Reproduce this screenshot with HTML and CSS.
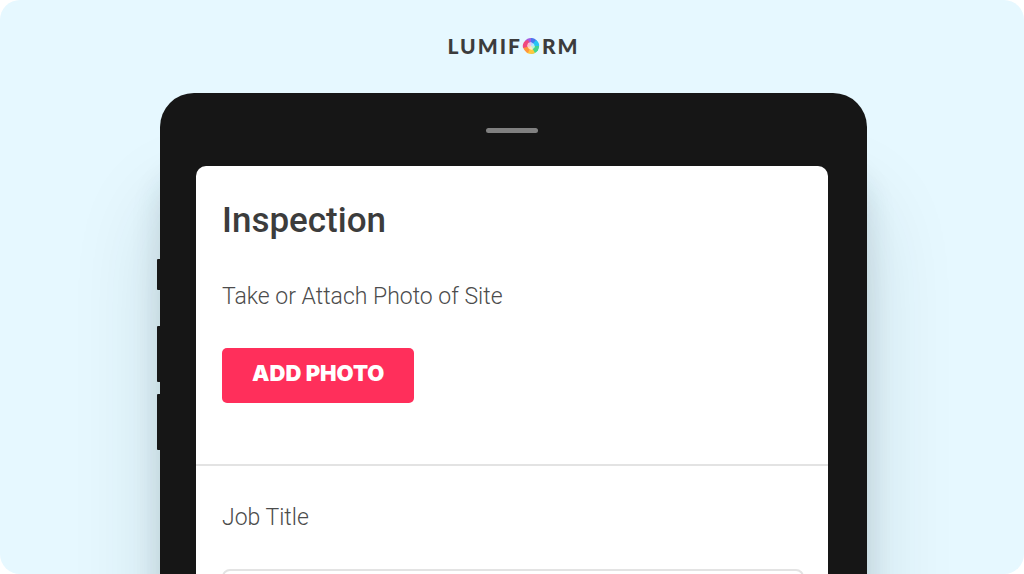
FILE: index.html
```html
<!DOCTYPE html>
<html lang="en">
<head>
  <meta charset="UTF-8">
  <meta name="viewport" content="width=device-width, initial-scale=1.0">
  <title>Lumiform</title>
  <link rel="stylesheet" href="styles.css">
</head>
<body>
  <main class="stage">
    <div class="logo" role="img" aria-label="Lumiform">
      <span>LUMIF</span>
      <svg class="logo-mark" viewBox="0 0 18 18" aria-hidden="true">
        <path d="M9 9 3 4Q5 1 9 1L12 2Z" fill="#a45be0"/>
        <path d="M9 9 9 1Q13 1 15 4L16 8Z" fill="#4a78ee"/>
        <path d="M9 9 14 3Q18 6 17 10L15 14Z" fill="#27c4f3"/>
        <path d="M9 9 17 9Q17 14 13 16L9 17Z" fill="#45d58a"/>
        <path d="M9 9 13 16Q9 18 5 16L3 13Z" fill="#ffc83d"/>
        <path d="M9 9 6 16Q2 14 1 10L2 7Z" fill="#ff963c"/>
        <path d="M9 9 1 11Q0 7 3 4L6 3Z" fill="#f0487f"/>
        <path d="M9 5 12 7 13 10 10 13 7 12 5 9 6 6Z" fill="#fff" opacity=".65"/>
      </svg>
      <span>RM</span>
    </div>

    <div class="device">
      <div class="side-keys">
        <span class="key key-small"></span>
        <span class="key"></span>
        <span class="key"></span>
      </div>
      <div class="speaker"></div>
      <div class="screen">
        <section class="section">
          <h1>Inspection</h1>
          <p class="field-label">Take or Attach Photo of Site</p>
          <button type="button" class="btn">ADD PHOTO</button>
        </section>
        <section class="section">
          <label class="field-label" for="job-title">Job Title</label>
          <input type="text" class="field-input" id="job-title">
        </section>
      </div>
    </div>
  </main>
</body>
</html>
```
FILE: styles.css
```css
*{
  box-sizing: border-box;
}
body{
  margin: 0;
  background: #fff;
  font-family: Roboto, "Liberation Sans", sans-serif;
  color: #3c3c3c;
}
.stage{
  height: 100vh;
  padding: 32px 157px 0 160px;
  border-radius: 20px;
  background: #e6f8ff;
  overflow: hidden;
}

.logo{
  display: flex;
  justify-content: center;
  align-items: center;
  font-family: Lato, sans-serif;
  font-size: 21px;
  line-height: 28px;
  font-weight: 900;
  letter-spacing: 2px;
}
.logo-mark{
  width: 18px;
  height: 18px;
  margin-right: 2px;
}

.device{
  position: relative;
  margin-top: 33px;
  padding: 35px 39px 40px 36px;
  border-radius: 34px;
  background: #161616;
  box-shadow: 0 110px 90px rgba(20, 50, 60, .14), 0 80px 30px rgba(20, 50, 60, .14);
}
.side-keys{
  position: absolute;
  top: 166px;
  left: -3px;
  display: flex;
  flex-direction: column;
  gap: 12px;
}
.key{
  width: 4px;
  height: 56px;
  border-radius: 1px 0 0 1px;
  background: #161616;
}
.key-small{
  height: 31px;
  margin-bottom: 24px;
}
.speaker{
  width: 52px;
  height: 5px;
  margin: 0 auto 33px;
  border-radius: 3px;
  background: #808080;
}

.screen{
  border-radius: 10px;
  background: #fff;
}
.section{
  padding: 34px 24px 61px 26px;
}
.section + .section{
  border-top: 2px solid #e3e3e3;
}
.section h1{
  margin: 0 0 37px;
  font-size: 35px;
  line-height: 42px;
  font-weight: 500;
}
.field-label{
  display: block;
  margin: 0 0 33px;
  font-size: 23px;
  line-height: 36px;
  font-weight: 300;
  color: #4c4c4c;
}
.btn{
  display: block;
  height: 55px;
  padding: 0 30px 5px;
  border: 0;
  border-radius: 5px;
  background: #ff2f5b;
  color: #fff;
  font-family: Inter, sans-serif;
  font-size: 22px;
  font-weight: 900;
  cursor: pointer;
}
.field-input{
  display: block;
  width: 100%;
  height: 56px;
  padding: 0 16px;
  border: 2px solid #e3e3e3;
  border-radius: 8px;
  font: inherit;
}
```
